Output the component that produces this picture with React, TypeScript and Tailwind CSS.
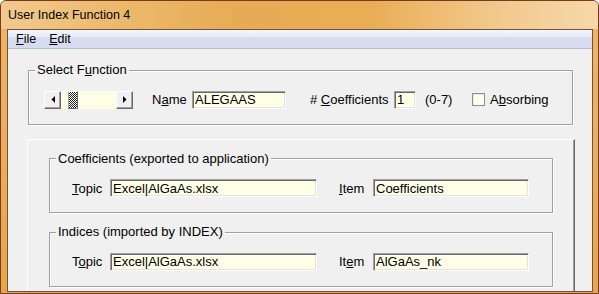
import React from "react";

const sunken =
  "h-[18px] border border-t-[#a0a0a0] border-l-[#a0a0a0] border-b-white border-r-white bg-[#ffffe8] shadow-[inset_1px_1px_0_#696969,inset_-1px_-1px_0_#e3e3e3] pl-[2px] text-[13px] text-black outline-none";

const raised =
  "border border-t-white border-l-white border-b-[#696969] border-r-[#696969] shadow-[inset_-1px_-1px_0_#a0a0a0] bg-[#f0f0f0]";

const Arrow: React.FC<{ dir: "left" | "right" }> = ({ dir }) => (
  <svg width="4" height="7" viewBox="0 0 4 7">
    {dir === "left" ? (
      <polygon points="4,0 4,7 0.5,3.5" fill="#000" />
    ) : (
      <polygon points="0,0 0,7 3.5,3.5" fill="#000" />
    )}
  </svg>
);

const ScrollBar: React.FC = () => (
  <div className="flex h-[18px] w-[89px]">
    <div className={`${raised} flex h-full w-[17px] items-center justify-center`}>
      <Arrow dir="left" />
    </div>
    <div className="flex h-full flex-1 bg-[#fffde6]">
      <div className="ml-[7px] h-full w-[10px] border border-t-white border-l-[#a0a0a0] border-b-[#696969] border-r-[#696969] bg-[repeating-conic-gradient(#222_0%_25%,#fff_0%_50%)] bg-[length:2px_2px]" />
    </div>
    <div className={`${raised} flex h-full w-[17px] items-center justify-center`}>
      <Arrow dir="right" />
    </div>
  </div>
);

const Group: React.FC<{ title: React.ReactNode; className?: string; children: React.ReactNode }> = ({
  title,
  className,
  children,
}) => (
  <fieldset
    className={`border border-[#a0a0a0] shadow-[inset_1px_1px_0_#fff,1px_1px_0_#fff] ${className ?? ""}`}
  >
    <legend className="ml-[6px] bg-[#f0f0f0] px-[2px] text-[13px] leading-[14px]">{title}</legend>
    {children}
  </fieldset>
);

const LinkRow: React.FC<{
  topic: React.ReactNode;
  item: React.ReactNode;
  topicValue: string;
  itemValue: string;
}> = ({ topic, item, topicValue, itemValue }) => (
  <div className="flex items-center pl-[22px] pt-[13px] pb-[14px]">
    <span className="w-[38px]">{topic}</span>
    <input readOnly defaultValue={topicValue} className={`${sunken} w-[207px]`} />
    <span className="ml-[22px] w-[34px]">{item}</span>
    <input readOnly defaultValue={itemValue} className={`${sunken} w-[156px]`} />
  </div>
);

const App: React.FC = () => {
  return (
    <div className="h-[294px] w-[599px] bg-white font-['Liberation_Sans',Arial,sans-serif] text-[13px] text-black">
      <div className="flex h-full w-full flex-col overflow-hidden rounded-t-[6px] border border-[#7a3a22] bg-gradient-to-b from-[#eeb668] to-[#e9a549]">
        {/* title bar */}
        <div className="flex h-[28px] items-center bg-[linear-gradient(to_right,#f2c98e_0%,#ecb96a_20%,#e7ab55_40%,#e9ad56_62%,#f1c88b_82%,#f6d8a9_100%)] pl-[7px]">
          <span className="text-[12.5px] text-black">User Index Function 4</span>
        </div>

        {/* client */}
        <div className="mb-[1px] ml-[6px] mr-[5px] flex flex-1 flex-col overflow-hidden border border-[#6b5540] bg-[#f0f0f0]">
          <div className="flex h-[19px] items-center gap-[13px] border-b border-[#b8bed4] bg-[linear-gradient(to_bottom,#f4f6fc_0%,#e8ecf8_35%,#d6dcef_45%,#d6dcef_100%)] pl-[8px] text-[12.5px]">
            <span>
              <u>F</u>ile
            </span>
            <span>
              <u>E</u>dit
            </span>
          </div>

          <div className="flex flex-1 flex-col">
            <Group
              title={
                <>
                  Select F<u>u</u>nction
                </>
              }
              className="ml-[20px] mt-[14px] w-[545px]"
            >
              <div className="flex items-center pl-[15px] pt-[13px] pb-[14px]">
                <ScrollBar />
                <span className="ml-[19px] w-[40px]">
                  N<u>a</u>me
                </span>
                <input readOnly defaultValue="ALEGAAS" className={`${sunken} w-[94px]`} />
                <span className="ml-[24px] w-[84px]">
                  # <u>C</u>oefficients
                </span>
                <input readOnly defaultValue="1" className={`${sunken} w-[22px]`} />
                <span className="ml-[9px] w-[47px]">(0-7)</span>
                <div className="h-[13px] w-[13px] border border-[#8e8f8f] bg-[#fffff0] shadow-[inset_1px_1px_0_#e6e6e6]" />
                <span className="ml-[5px]">
                  A<u>b</u>sorbing
                </span>
              </div>
            </Group>

            <div className="ml-[19px] mt-[14px] w-[548px] flex-1 border-l border-t border-r border-l-white border-t-white border-r-[#696969] pb-[20px] shadow-[inset_-1px_0_0_#a0a0a0]">
              <Group title="Coefficients (exported to application)" className="ml-[21px] mt-[12px] w-[504px]">
                <LinkRow
                  topic={
                    <>
                      <u>T</u>opic
                    </>
                  }
                  item={
                    <>
                      <u>I</u>tem
                    </>
                  }
                  topicValue="Excel|AlGaAs.xlsx"
                  itemValue="Coefficients"
                />
              </Group>

              <Group title="Indices (imported by INDEX)" className="ml-[21px] mt-[12px] w-[504px]">
                <LinkRow
                  topic={
                    <>
                      T<u>o</u>pic
                    </>
                  }
                  item={
                    <>
                      It<u>e</u>m
                    </>
                  }
                  topicValue="Excel|AlGaAs.xlsx"
                  itemValue="AlGaAs_nk"
                />
              </Group>
            </div>
          </div>
        </div>
      </div>
    </div>
  );
};

export default App;
